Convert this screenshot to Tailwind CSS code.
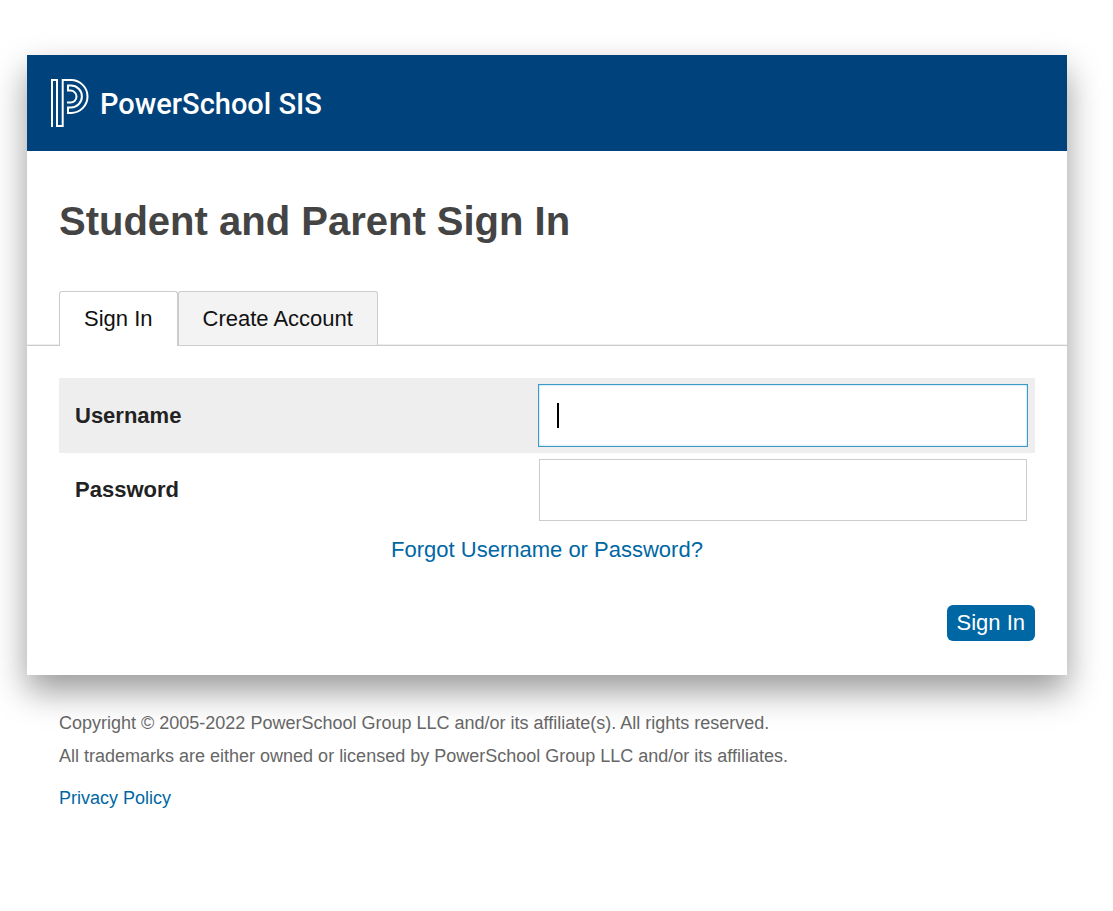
<!DOCTYPE html>
<html lang="en">
<head>
    <meta charset="UTF-8">
    <meta name="viewport" content="width=device-width, initial-scale=1.0">
    <title>Student and Parent Sign In</title>
    <script src="https://cdn.jsdelivr.net/npm/@tailwindcss/browser@4"></script>
</head>
<body class="bg-white font-['Liberation_Sans',Arial,sans-serif] text-[22px] leading-8 text-[#222]">
    <div class="pt-[55px] pl-[27px] pr-[46px]">
        <main class="bg-white shadow-[0_16px_32px_rgba(0,0,0,0.4)]">
            <header class="flex items-center gap-2.5 h-24 bg-[#00427c] px-[23px] text-white">
                <!-- Logo -->
                <svg class="w-10 h-[50px]" viewBox="0 0 40 50" fill="none" stroke="currentColor" stroke-width="2" aria-hidden="true">
                    <path d="M2 49V2H7V48H12.700V2H21A16.500 16.500 0 0 1 21 35H18V29.400H21A10.900 10.900 0 0 0 21 7.600H18V12.600H20.500A6 6 0 0 1 20.500 24.600H17"/>
                </svg>
                <span class="pt-0.5 font-['Roboto',sans-serif] text-[29px] font-medium">PowerSchool SIS</span>
            </header>

            <h1 class="px-8 pt-[42px] pb-[42px] text-[40px] leading-[56px] font-bold text-[#444]">Student and Parent Sign In</h1>

            <!-- Tabs -->
            <nav class="flex px-8 border-b border-[#ccc] shadow-[inset_0_-1px_0_#eee]">
                <a href="#signin" class="-mb-px h-[55px] px-6 pt-[11px] rounded-t-[3px] border border-b-0 border-[#ccc] bg-white text-[#111]">Sign In</a>
                <a href="#create" class="h-[54px] px-6 pt-[11px] rounded-t-[3px] border border-b-0 border-[#ccc] bg-[#f3f3f3] text-[#111]">Create Account</a>
            </nav>

            <form class="px-8 pt-8 pb-[34px]">
                <div class="grid grid-cols-[479fr_490fr] items-center h-[75px] bg-[#eee] pr-[7px]">
                    <label for="username" class="pl-4 font-bold">Username</label>
                    <div class="relative">
                        <input type="text" id="username" class="block w-full h-[63px] px-[18px] border border-[#4098c6] bg-white shadow-[inset_0_0_2px_#7cc8ee] outline-none caret-transparent">
                        <!-- Caret -->
                        <span class="absolute left-[19px] top-[19px] w-0.5 h-[25px] bg-black"></span>
                    </div>
                </div>
                <div class="grid grid-cols-[479fr_490fr] items-center h-[74px] pr-[7px]">
                    <label for="password" class="pl-4 font-bold">Password</label>
                    <div class="px-px">
                        <input type="password" id="password" class="block w-full h-[62px] px-[18px] border border-[#ccc] bg-white outline-none">
                    </div>
                </div>
                <div class="pt-[7px] text-center">
                    <a href="#forgot" class="text-[#0067a5]">Forgot Username or Password?</a>
                </div>
                <div class="flex justify-end pt-[39px]">
                    <button type="submit" class="h-9 px-2.5 rounded-md bg-[#0067a5] text-white">Sign In</button>
                </div>
            </form>
        </main>

        <footer class="px-8 pt-8 text-[18px] leading-[33px] text-[#666]">
            <p>Copyright © 2005-2022 PowerSchool Group LLC and/or its affiliate(s). All rights reserved.</p>
            <p>All trademarks are either owned or licensed by PowerSchool Group LLC and/or its affiliates.</p>
            <p class="pt-[9px]"><a href="#privacy" class="text-[#0067a5]">Privacy Policy</a></p>
        </footer>
    </div>
</body>
</html>
